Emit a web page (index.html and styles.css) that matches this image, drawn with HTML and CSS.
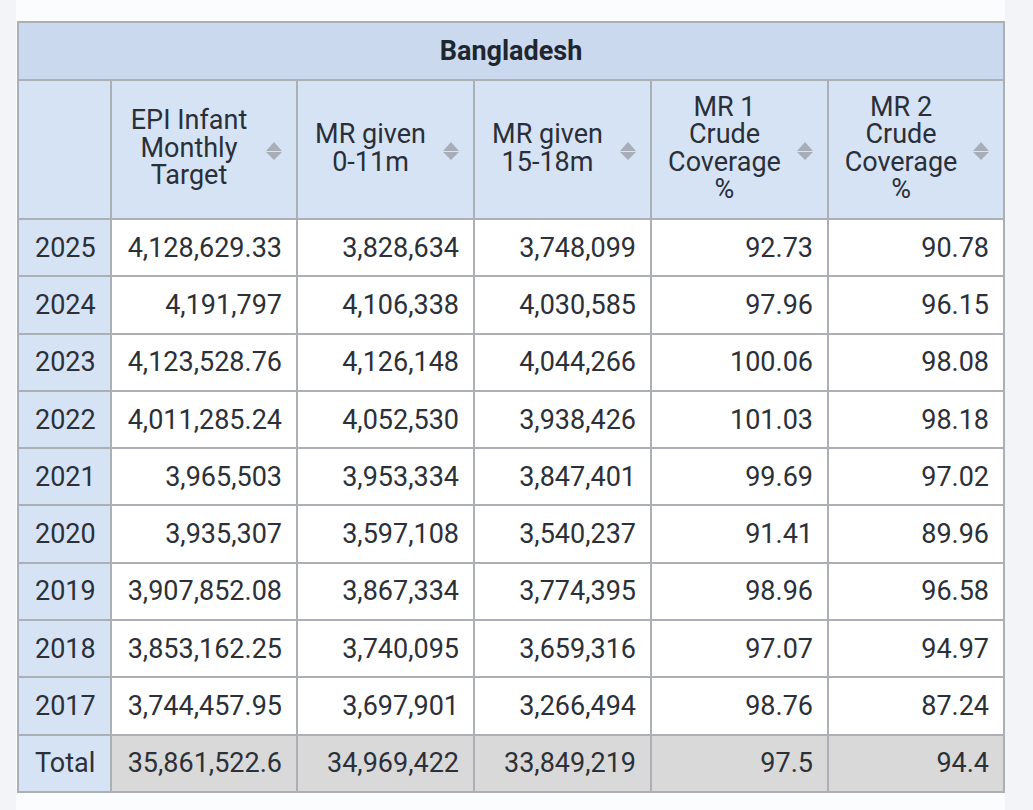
FILE: index.html
```html
<!DOCTYPE html>
<html>
<head>
<meta charset="utf-8">
<link rel="stylesheet" href="styles.css">
</head>
<body>
<div class="page">
  <table class="data">
    <colgroup>
      <col class="c0"><col class="c1"><col class="c2"><col class="c3"><col class="c4"><col class="c5">
    </colgroup>
    <thead>
      <tr class="title-row"><th colspan="6">Bangladesh</th></tr>
      <tr class="head-row">
        <th class="corner"></th>
        <th><div class="hd"><span class="lbl">EPI Infant<br>Monthly<br>Target</span><span class="sort"><i class="up"></i><i class="down"></i></span></div></th>
        <th><div class="hd"><span class="lbl">MR given<br>0-11m</span><span class="sort"><i class="up"></i><i class="down"></i></span></div></th>
        <th><div class="hd"><span class="lbl">MR given<br>15-18m</span><span class="sort"><i class="up"></i><i class="down"></i></span></div></th>
        <th><div class="hd"><span class="lbl">MR 1<br>Crude<br>Coverage<br>%</span><span class="sort"><i class="up"></i><i class="down"></i></span></div></th>
        <th><div class="hd"><span class="lbl">MR 2<br>Crude<br>Coverage<br>%</span><span class="sort"><i class="up"></i><i class="down"></i></span></div></th>
      </tr>
    </thead>
    <tbody>
      <tr><td class="yr">2025</td><td>4,128,629.33</td><td>3,828,634</td><td>3,748,099</td><td>92.73</td><td>90.78</td></tr>
      <tr><td class="yr">2024</td><td>4,191,797</td><td>4,106,338</td><td>4,030,585</td><td>97.96</td><td>96.15</td></tr>
      <tr><td class="yr">2023</td><td>4,123,528.76</td><td>4,126,148</td><td>4,044,266</td><td>100.06</td><td>98.08</td></tr>
      <tr><td class="yr">2022</td><td>4,011,285.24</td><td>4,052,530</td><td>3,938,426</td><td>101.03</td><td>98.18</td></tr>
      <tr><td class="yr">2021</td><td>3,965,503</td><td>3,953,334</td><td>3,847,401</td><td>99.69</td><td>97.02</td></tr>
      <tr><td class="yr">2020</td><td>3,935,307</td><td>3,597,108</td><td>3,540,237</td><td>91.41</td><td>89.96</td></tr>
      <tr><td class="yr">2019</td><td>3,907,852.08</td><td>3,867,334</td><td>3,774,395</td><td>98.96</td><td>96.58</td></tr>
      <tr><td class="yr">2018</td><td>3,853,162.25</td><td>3,740,095</td><td>3,659,316</td><td>97.07</td><td>94.97</td></tr>
      <tr><td class="yr">2017</td><td>3,744,457.95</td><td>3,697,901</td><td>3,266,494</td><td>98.76</td><td>87.24</td></tr>
    </tbody>
    <tfoot>
      <tr class="total"><td class="yr">Total</td><td>35,861,522.6</td><td>34,969,422</td><td>33,849,219</td><td>97.5</td><td>94.4</td></tr>
    </tfoot>
  </table>
</div>
</body>
</html>
```

FILE: styles.css
```css
html, body {
  margin: 0;
  padding: 0;
  background: #f3f4f7;
}
body {
  width: 1033px;
  height: 810px;
  overflow: hidden;
  font-family: Roboto, "Liberation Sans", sans-serif;
  color: #2c3038;
}
.page {
  display: inline-block;
  margin-left: 16px;
  padding: 21px 0 18px 1px;
  background: #fbfcfd;
}
.data {
  border-collapse: collapse;
  table-layout: fixed;
  width: 988px;
  border: 2px solid #acafb3;
  font-size: 27px;
}
.c0 { width: 93px; }
.c1 { width: 186px; }
.c2 { width: 177px; }
.c3 { width: 177px; }
.c4 { width: 177px; }
.c5 { width: 176px; }
.data th, .data td {
  border: 2px solid #acafb3;
  padding: 0 14px;
}
.title-row th {
  height: 56px;
  background: #cbd9ee;
  font-weight: 700;
  font-size: 27px;
  color: #1f2630;
  text-align: center;
  padding: 0;
}
.head-row th {
  height: 137px;
  background: #d6e3f5;
  font-weight: 400;
  vertical-align: middle;
}
.hd {
  display: flex;
  align-items: center;
}
.lbl {
  flex: 1;
  text-align: center;
  line-height: 27.5px;
  color: #2a2f38;
  margin-top: -2px;
  white-space: nowrap;
}
.sort {
  width: 16px;
  flex: none;
  margin-left: 14px;
  display: flex;
  flex-direction: column;
  align-items: center;
  gap: 1px;
  margin-top: 2px;
}
.sort i {
  display: block;
  width: 0;
  height: 0;
  border-left: 8px solid transparent;
  border-right: 8px solid transparent;
}
.sort .up { border-bottom: 9px solid #a7aeb8; }
.sort .down { border-top: 8px solid #a7aeb8; }
.data tbody tr, .data tfoot tr {
  height: 57.3px;
}
.data td {
  text-align: right;
  background: #ffffff;
  line-height: 30px;
  white-space: nowrap;
  overflow: visible;
}
.data td.yr {
  background: #d6e3f5;
  text-align: left;
  padding-left: 16px;
  padding-right: 0;
}
.total td {
  background: #d9d9d9;
}
.total td.yr {
  background: #d6e3f5;
}
```
